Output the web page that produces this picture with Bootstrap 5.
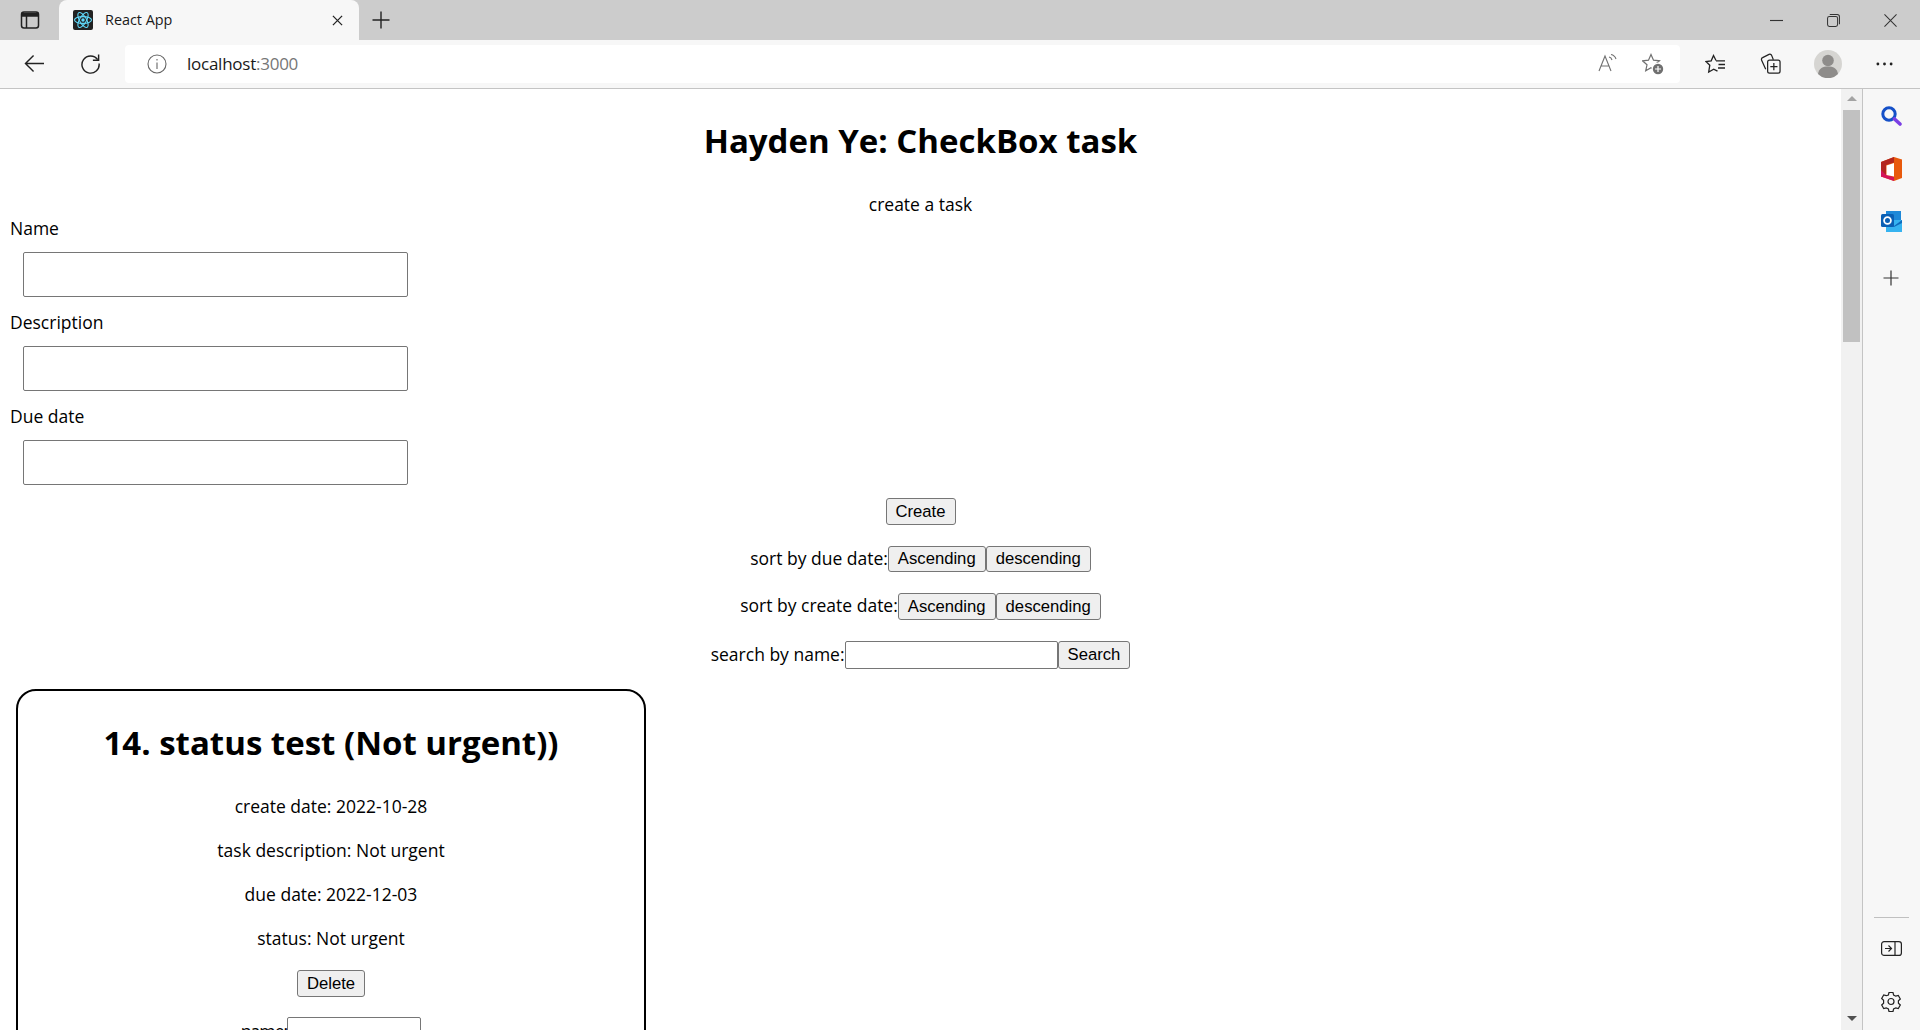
<!DOCTYPE html>
<html lang="en">
<head>
    <meta charset="UTF-8">
    <meta name="viewport" content="width=device-width, initial-scale=1.0">
    <title>React App</title>
    <link href="https://cdn.jsdelivr.net/npm/bootstrap@5.3.3/dist/css/bootstrap.min.css" rel="stylesheet">
    <style>
        html, body { height: 1030px; overflow: hidden; }
        body { font-family: "Open Sans", "Noto Sans", sans-serif; font-size: 17.5px; color: #000; background: #fff; }
        svg { display: block; }

        /* browser chrome */
        .tab-strip { height: 40px; background: #ccc; }
        .tab-toggle { width: 59px; }
        .tab-item { width: 300px; height: 40px; background: #f7f7f7; border-radius: 8px 8px 0 0; padding: 0 16px 0 14px; font-size: 14.4px; color: #1a1a1a; }
        .tab-title { margin-left: 12px; }
        .tab-plus { margin-left: 13px; }
        .win-group { margin-right: 1px; }
        .win-btn { width: 57px; }
        .tool-bar { height: 49px; background: #f7f7f7; border-bottom: 1px solid #c4c4c4; padding-bottom: 1px; }
        .tool-btn { width: 56px; }
        .tool-first { margin-left: 6px; }
        .tool-coll { width: 54px; }
        .tool-prof { width: 62px; }
        .tool-more { width: 50px; }
        .addr-bar { width: 1555px; height: 38px; background: #fff; border-radius: 4px; margin: 0 7px; padding: 0 5px 0 22px; }
        .addr-text { margin-left: 20px; font-size: 17px; color: #1a1a1a; letter-spacing: -.25px; }
        .addr-port { color: #767676; }
        .addr-icon { width: 45px; }

        /* scrollbar and side panel */
        .main-area { height: 941px; }
        .page-pane { width: 1841px; overflow: hidden; }
        .scroll-rail { width: 21px; background: #f1f1f1; padding: 7px 2px; }
        .scroll-up { width: 0; height: 0; border: 5px solid transparent; border-top: 0; border-bottom: 5px solid #a3a3a3; margin: 0 auto 9px; }
        .scroll-thumb { height: 232px; background: #c1c1c1; }
        .scroll-down { width: 0; height: 0; border: 5px solid transparent; border-bottom: 0; border-top: 5px solid #505050; margin: 0 auto 2px; }
        .side-bar { width: 58px; background: #f7f7f7; border-left: 1px solid #c4c4c4; padding: 17px 1px 18px 0; }
        .side-search { margin-bottom: 31px; }
        .side-office { margin-bottom: 30px; }
        .side-outlook { margin-bottom: 38px; }
        .side-rule { width: 35px; height: 1px; background: #c0c0c0; margin-bottom: 23px; }
        .side-panel { margin-bottom: 35px; }

        /* page */
        .page-title { font-size: 33px; font-weight: 700; line-height: 44px; margin: 30px 0 29px; }
        .line-text { line-height: 24px; margin: 0; }
        .task-form { padding-left: 10px; }
        .field-input { display: block; width: 385px; height: 45px; margin: 12px 0 13px 13px; border: 1px solid #767676; border-radius: 2px; background: #fff; }
        .plain-btn { font-family: "Liberation Sans", Arial, sans-serif; font-size: 16.67px; line-height: 20px; height: 27px; padding: 0 9px; background: #efefef; color: #000; border: 1px solid #767676; border-radius: 3px; }
        .create-row { margin-bottom: 21px; }
        .row-label { margin-bottom: 2px; }
        .sort-row { height: 27px; margin-bottom: 20px; }
        .sort-row-first .plain-btn { height: 26px; margin-bottom: 1px; }
        .sort-row-last { margin-bottom: 21px; }
        .search-row { height: 28px; }
        .search-input { width: 213px; height: 28px; border: 1px solid #767676; border-radius: 2px; background: #fff; }
        .search-row .plain-btn { height: 28px; }
        .task-box { width: 630px; height: 400px; margin: 20px 0 0 16px; border: 2px solid #000; border-radius: 20px; }
        .box-title { font-size: 33px; font-weight: 700; line-height: 44px; margin: 30px 0 29px; }
        .box-line { line-height: 24px; margin: 0 0 20px; }
        .box-btn { margin-bottom: 20px; }
        .box-label { letter-spacing: -.9px; padding-top: 1px; }
        .box-input { width: 134px; height: 28px; border: 1px solid #767676; border-radius: 2px; background: #fff; }
    </style>
</head>
<body>
    <!-- Tab strip -->
    <div class="tab-strip d-flex align-items-center">
        <div class="tab-toggle d-flex justify-content-center">
            <svg width="20" height="20" viewBox="0 0 20 20" fill="none" stroke="#222" stroke-width="1.5"><rect x="1.5" y="2" width="17" height="16" rx="2.5"/><path d="M2 3.5h16v2.5H2z" fill="#222"/><path d="M6.5 6v12"/></svg>
        </div>
        <div class="tab-item d-flex align-items-center">
            <svg width="20" height="20" viewBox="0 0 20 20"><rect width="20" height="20" rx="2" fill="#222"/><g fill="none" stroke="#61dafb" stroke-width="1.1"><ellipse cx="10" cy="10" rx="8.5" ry="3.4"/><ellipse cx="10" cy="10" rx="8.5" ry="3.4" transform="rotate(60 10 10)"/><ellipse cx="10" cy="10" rx="8.5" ry="3.4" transform="rotate(120 10 10)"/></g><circle cx="10" cy="10" r="1.7" fill="#61dafb"/></svg>
            <span class="tab-title flex-grow-1">React App</span>
            <svg width="11" height="11" viewBox="0 0 12 12" stroke="#222" stroke-width="1.4"><path d="M1 1l10 10M11 1L1 11"/></svg>
        </div>
        <svg class="tab-plus" width="18" height="18" viewBox="0 0 18 18" stroke="#222" stroke-width="1.4"><path d="M9 .5v17M.5 9h17"/></svg>
        <div class="win-group ms-auto d-flex">
            <div class="win-btn d-flex justify-content-center"><svg width="13" height="13" viewBox="0 0 14 14" stroke="#333" stroke-width="1.2"><path d="M0 7h14"/></svg></div>
            <div class="win-btn d-flex justify-content-center"><svg width="13" height="13" viewBox="0 0 14 14" fill="none" stroke="#333" stroke-width="1.1"><rect x=".6" y="2.6" width="10.8" height="10.8" rx="2"/><path d="M3 .6h8a2.4 2.4 0 0 1 2.4 2.4v8"/></svg></div>
            <div class="win-btn d-flex justify-content-center"><svg width="13" height="13" viewBox="0 0 14 14" stroke="#333" stroke-width="1.1"><path d="M.5.5l13 13M13.5.5l-13 13"/></svg></div>
        </div>
    </div>

    <!-- Toolbar -->
    <div class="tool-bar d-flex align-items-center">
        <div class="tool-btn tool-first d-flex justify-content-center"><svg width="21" height="19" viewBox="0 0 22 20" fill="none" stroke="#222" stroke-width="1.5"><path d="M21 10H1.5M10 1.5L1.5 10l8.500 8.500"/></svg></div>
        <div class="tool-btn d-flex justify-content-center"><svg width="21" height="21" viewBox="0 0 22 22" fill="none" stroke="#222" stroke-width="1.5"><path d="M18.5 7A9 9 0 1 0 20 11"/><path d="M19.500 1.500V7.500H13.500"/></svg></div>
        <div class="addr-bar d-flex align-items-center">
            <svg width="20" height="20" viewBox="0 0 20 20" fill="none" stroke="#666" stroke-width="1.1"><circle cx="10" cy="10" r="9"/><path d="M10 8.500v6.500M10 5v1.600"/></svg>
            <span class="addr-text">localhost<span class="addr-port">:3000</span></span>
            <div class="ms-auto d-flex">
                <div class="addr-icon d-flex justify-content-center"><svg width="20" height="20" viewBox="0 0 20 20" fill="none" stroke="#707070" stroke-width="1.1"><path d="M1 18L7 3l6 15M3 13h8"/><path d="M11 4c1.500.3 2.500 1.200 3 3M13 1.500c2.500.5 4.200 2 5 4.500"/></svg></div>
                <div class="addr-icon d-flex justify-content-center"><svg width="22" height="22" viewBox="0 0 22 22" fill="none" stroke="#707070" stroke-width="1.2"><path d="M9 1.500L11.500 7.200L17.500 7.800L13 11.800L14.300 17.800L9 14.700L3.700 17.800L5 11.800L.5 7.800L6.500 7.200Z"/><circle cx="16" cy="16" r="6.500" fill="#fff" stroke="none"/><circle cx="16" cy="16" r="5.200" fill="#707070" stroke="none"/><path d="M16 13v6M13 16h6" stroke="#fff"/></svg></div>
            </div>
        </div>
        <div class="tool-btn d-flex justify-content-center"><svg width="21" height="20" viewBox="0 0 21 20" fill="none" stroke="#222" stroke-width="1.300"><path d="M11 6.500L8.500 1.500L6.200 6.800L1 7.500L4.800 11.200L3.700 18L8.700 15.200L12.500 17.200"/><path d="M11 6.800h9M13.500 10.500h6.500M13 14h7"/></svg></div>
        <div class="tool-btn tool-coll d-flex justify-content-center"><svg width="21" height="21" viewBox="0 0 22 22" fill="none" stroke="#222" stroke-width="1.300"><rect x="8" y="7.500" width="13" height="13.500" rx="2"/><path d="M14.500 10.500v7.500M10.800 14.200h7.500"/><path d="M6 17L1.700 7.500a2 2 0 0 1 1-2.700L9.500 1.500a2 2 0 0 1 2.700 1L14 7"/></svg></div>
        <div class="tool-btn tool-prof d-flex justify-content-center"><svg width="28" height="28" viewBox="0 0 28 28"><circle cx="14" cy="14" r="14" fill="#d6d5d2"/><circle cx="14" cy="10.500" r="5.800" fill="#8e8c8a"/><path d="M4 24c1-6 5-7.500 10-7.500S23 18 24 24a14 14 0 0 1-20 0z" fill="#8e8c8a"/></svg></div>
        <div class="tool-btn tool-more d-flex justify-content-center"><svg width="17" height="4" viewBox="0 0 18 4" fill="#222"><circle cx="2" cy="2" r="1.500"/><circle cx="9" cy="2" r="1.500"/><circle cx="16" cy="2" r="1.500"/></svg></div>
    </div>

    <div class="main-area d-flex">
        <!-- Page content -->
        <div class="page-pane">
            <h1 class="page-title text-center">Hayden Ye: CheckBox task</h1>
            <p class="line-text text-center">create a task</p>
            <div class="task-form">
                <div class="line-text">Name</div>
                <input class="field-input" type="text">
                <div class="line-text">Description</div>
                <input class="field-input" type="text">
                <div class="line-text">Due date</div>
                <input class="field-input" type="text">
            </div>
            <div class="create-row d-flex justify-content-center"><button class="plain-btn" type="button">Create</button></div>
            <div class="sort-row sort-row-first d-flex justify-content-center align-items-center"><span class="row-label">sort by due date:</span><button class="plain-btn" type="button">Ascending</button><button class="plain-btn" type="button">descending</button></div>
            <div class="sort-row sort-row-last d-flex justify-content-center align-items-center"><span class="row-label">sort by create date:</span><button class="plain-btn" type="button">Ascending</button><button class="plain-btn" type="button">descending</button></div>
            <div class="search-row d-flex justify-content-center align-items-center"><span class="row-label">search by name:</span><input class="search-input" type="text"><button class="plain-btn" type="button">Search</button></div>
            <div class="task-box text-center">
                <h1 class="box-title">14. status test (Not urgent))</h1>
                <p class="box-line">create date: 2022-10-28</p>
                <p class="box-line">task description: Not urgent</p>
                <p class="box-line">due date: 2022-12-03</p>
                <p class="box-line">status: Not urgent</p>
                <div class="box-btn d-flex justify-content-center"><button class="plain-btn" type="button">Delete</button></div>
                <div class="d-flex justify-content-center"><span class="box-label">name:</span><input class="box-input" type="text"></div>
            </div>
        </div>

        <!-- Scrollbar -->
        <div class="scroll-rail d-flex flex-column">
            <div class="scroll-up"></div>
            <div class="scroll-thumb"></div>
            <div class="scroll-down mt-auto"></div>
        </div>

        <!-- Side panel -->
        <div class="side-bar d-flex flex-column align-items-center">
            <svg class="side-search" width="21" height="20" viewBox="0 0 21 20" fill="none"><circle cx="8" cy="8" r="6.200" stroke="#1550c8" stroke-width="3"/><path d="M13.500 13l5.500 5" stroke="#7b3fe4" stroke-width="3.600" stroke-linecap="round"/></svg>
            <svg class="side-office" width="21" height="24" viewBox="0 0 21 24"><path d="M13 0L21 2.500V21L13 24 0 19.500V5z" fill="#e8590c"/><path d="M13 0L0 5v14.500l5-1.800V8L13 5.500z" fill="#b3261e"/><path d="M0 13v6.500L13 24v-4L5 18z" fill="#d4145a"/><path d="M5.500 8.500L13 6v13.500l-7.500-1.500z" fill="#fff"/></svg>
            <svg class="side-outlook" width="21" height="21" viewBox="0 0 21 21"><rect x="5" width="15" height="14" fill="#1e88d8"/><path d="M5 9h16v12H5z" fill="#36b3f0"/><path d="M5 9l8 6 8-6v3l-8 4-8-4z" fill="#0f6cbd"/><rect y="3" width="13" height="13" rx="1.500" fill="#0a5fb4"/><circle cx="6.500" cy="9.500" r="3.400" fill="none" stroke="#fff" stroke-width="1.800"/></svg>
            <svg width="16" height="16" viewBox="0 0 16 16" stroke="#333" stroke-width="1.200"><path d="M8 .5v15M.5 8h15"/></svg>
            <div class="mt-auto side-rule"></div>
            <svg class="side-panel" width="21" height="15" viewBox="0 0 21 15" fill="none" stroke="#222" stroke-width="1.200"><rect x=".6" y=".6" width="19.800" height="13.800" rx="2.500"/><path d="M14 1v13"/><path d="M4 7.500h6.500M7.500 4.500l3 3-3 3"/></svg>
            <svg width="20" height="21" viewBox="0 0 20 21" fill="none" stroke="#222" stroke-width="1.200"><circle cx="10" cy="10.500" r="3"/><path d="M8 1.500h4l.6 2.500 2.200 1.200 2.500-.7 2 3.500-1.900 1.800v2.400l1.900 1.800-2 3.500-2.500-.7-2.200 1.200-.6 2.500H8l-.6-2.500-2.200-1.200-2.500.7-2-3.500 1.900-1.800V9.300L.7 7.500l2-3.500 2.500.7L7.400 4z"/></svg>
        </div>
    </div>

    <script src="https://cdn.jsdelivr.net/npm/bootstrap@5.3.3/dist/js/bootstrap.bundle.min.js"></script>
</body>
</html>
